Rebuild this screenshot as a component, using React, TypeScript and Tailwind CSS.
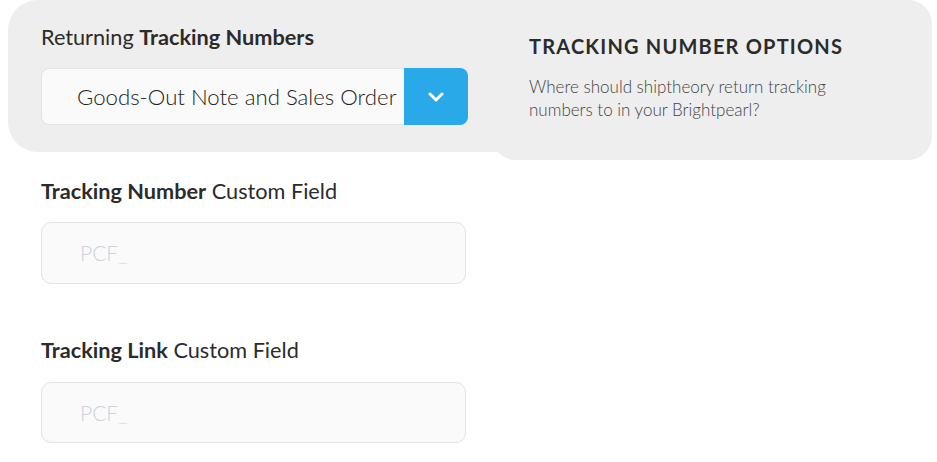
import React from "react";

export default function App() {
  return (
    <div className="w-[937px] h-[462px] bg-white overflow-hidden font-['Lato',sans-serif] text-[#2b2b2b]">
      <div className="flex items-start pl-2">
        <div className="w-[515px] h-[152px] shrink-0 bg-[#eeeeee] rounded-l-[30px] pl-[33px] pt-[23px]">
          <div className="text-[21.7px] leading-[28px] text-[#2b2b2b] whitespace-nowrap">
            Returning <span className="font-bold">Tracking Numbers</span>
          </div>
          <div className="mt-[17px] flex w-[427px] h-[57px]">
            <div className="flex-1 flex items-center bg-[#fafafa] border border-[#e3e3e3] border-r-0 rounded-l-[8px] pl-[35px] text-[22.2px] font-light text-[#222] whitespace-nowrap overflow-hidden">
              Goods-Out Note and Sales Order
            </div>
            <div className="w-[64px] flex items-center justify-center bg-[#2aa9e8] rounded-r-[8px]">
              <svg width="16" height="10" viewBox="0 0 16 10" fill="none">
                <path d="M2 2 L8 8 L14 2" stroke="white" strokeWidth="3" strokeLinecap="round" strokeLinejoin="round" />
              </svg>
            </div>
          </div>
        </div>
        <div className="-ml-[31px] w-[440px] h-[160px] shrink-0 bg-[#eeeeee] rounded-[24px] pl-[37px] pt-[34px]">
          <div className="text-[20px] leading-[24px] font-bold tracking-[1.2px] text-[#2b2b2b] whitespace-nowrap">
            TRACKING NUMBER OPTIONS
          </div>
          <p className="mt-[17px] text-[17px] leading-[23px] font-light text-[#444] w-[320px]">
            Where should shiptheory return tracking numbers to in your Brightpearl?
          </p>
        </div>
      </div>
      <div className="pl-[41px] pt-[17px]">
        <div className="text-[21.7px] leading-[28px] whitespace-nowrap">
          <span className="font-bold">Tracking Number</span> Custom Field
        </div>
        <div className="mt-[17px] w-[425px] h-[62px] flex items-center bg-[#fafafa] border border-[#e3e3e3] rounded-[10px] pl-[38px] text-[21px] font-light text-[#d0d0de]">
          PCF_
        </div>
        <div className="mt-[52px] text-[21.7px] leading-[28px] whitespace-nowrap">
          <span className="font-bold">Tracking Link</span> Custom Field
        </div>
        <div className="mt-[18px] w-[425px] h-[61px] flex items-center bg-[#fafafa] border border-[#e3e3e3] rounded-[10px] pl-[38px] text-[21px] font-light text-[#d0d0de]">
          PCF_
        </div>
      </div>
    </div>
  );
}
